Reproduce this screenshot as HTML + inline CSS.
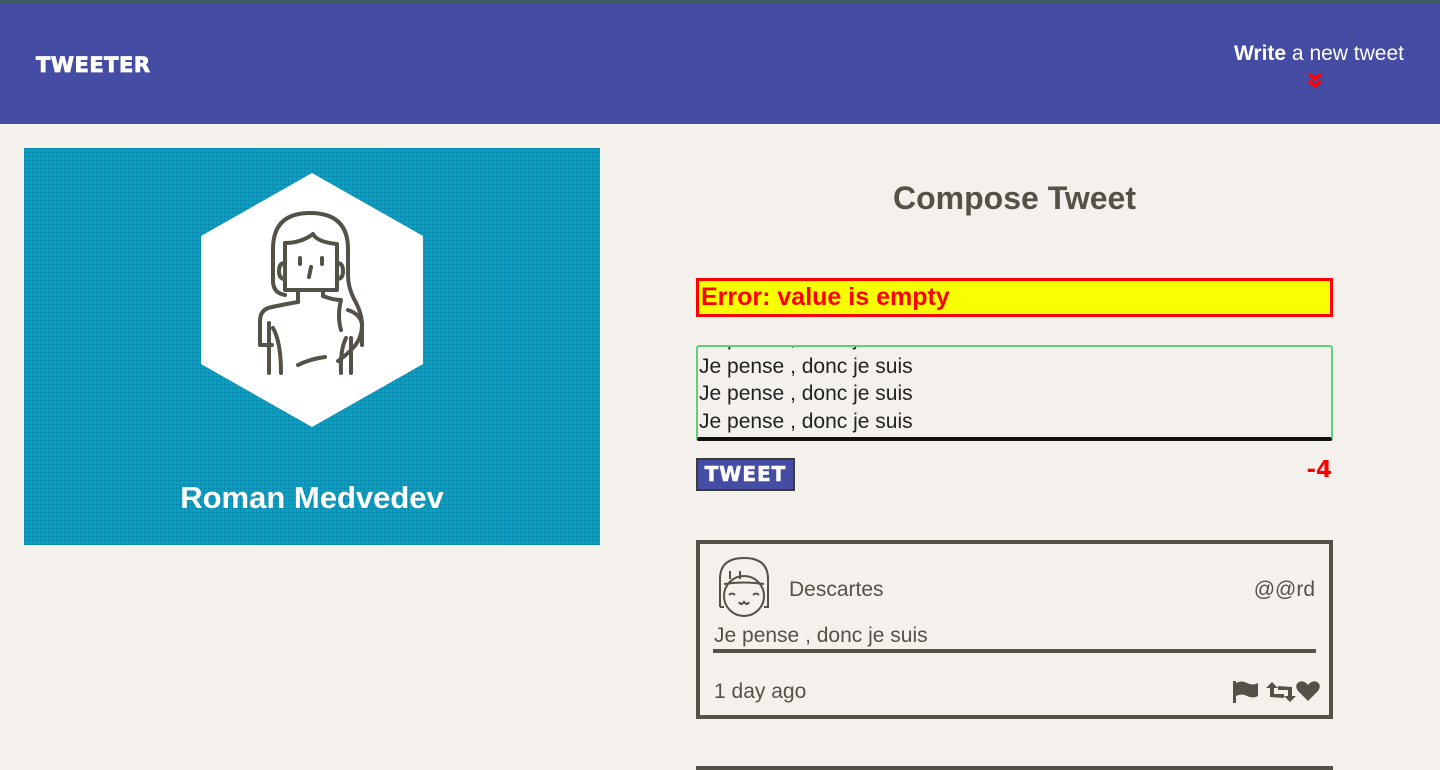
<!DOCTYPE html>
<html><head><meta charset="utf-8"><style>
*{box-sizing:border-box;margin:0;padding:0}
html,body{width:1440px;height:770px;overflow:hidden}
body{background:#f4f1ec;font-family:"Liberation Sans",sans-serif;color:#545149;position:relative}
.hdr{position:absolute;left:0;top:0;width:1440px;height:124px;background:#454ca3;border-top:3px solid #3f5b66}
.logo{position:absolute;left:36px;top:50px;color:#fff;font-weight:900;font-size:21px;letter-spacing:0.5px;font-family:"DejaVu Sans",sans-serif;-webkit-text-stroke:0.8px #fff}
.write{position:absolute;right:36px;top:39px;color:#fff;font-size:21px}
.chev{position:absolute;left:1305px;top:68px}
.card{position:absolute;left:24px;top:148px;width:576px;height:397px;
background-image:repeating-linear-gradient(0deg,rgba(0,70,100,.15) 0 1px,transparent 1px 4px),repeating-linear-gradient(90deg,rgba(0,70,100,.15) 0 1px,transparent 1px 4px);background-color:#0b9fc3}
.name{position:absolute;left:0;width:576px;top:332px;text-align:center;color:#fff;font-weight:bold;font-size:31px}
h2{position:absolute;left:696px;width:637px;top:180px;text-align:center;font-size:32px;font-weight:bold}
.err{position:absolute;left:696px;top:278px;width:637px;height:39px;background:#f8ff00;border:3px solid #f00;color:#f00;font-weight:bold;font-size:25px;padding-left:2px;line-height:32px}
.ta{position:absolute;left:696px;top:345px;width:637px;height:96px;border:2px solid #5fcf7a;border-bottom:4px solid #111;border-radius:3px;overflow:hidden;font-size:21px;color:#222;line-height:27.5px;padding-left:1px}
.btn{position:absolute;left:696px;top:458px;width:99px;height:33px;background:#454ca3;border:2px solid #3a3a3a;color:#fff;font-weight:900;font-family:"DejaVu Sans",sans-serif;font-size:20px;text-align:center;line-height:29px;letter-spacing:1px;-webkit-text-stroke:0.6px #fff}
.cnt{position:absolute;left:1290px;top:457px;width:42px;text-align:right;color:#f00;font-weight:900;font-size:23px;font-family:"DejaVu Sans",sans-serif}
.tw{position:absolute;left:696px;top:540px;width:637px;height:179px;border:4px solid #545149}
.tw2{position:absolute;left:696px;top:766px;width:637px;height:4px;background:#545149}
</style></head><body>
<div class="hdr"><div class="logo">TWEETER</div>
<div class="write"><b>Write</b> a new tweet</div>
<svg class="chev" width="20" height="20" viewBox="0 0 20 20"><path d="M4 3l6 5 6-5M4 10l6 5 6-5" fill="none" stroke="#f00" stroke-width="3.5"/></svg>
</div>
<div class="card">
<svg style="position:absolute;left:177px;top:25px" width="222" height="254" viewBox="0 0 222 254"><polygon points="111,0 222,63 222,191 111,254 0,191 0,63" fill="#fff"/>
<g fill="none" stroke="#545149" stroke-width="4" stroke-linecap="round" stroke-linejoin="round">
<path d="M84 122 q-12-2 -12-14 V76 q0-36 37-36 q38 0 38 36 V102 q0 12 6 24 q8 14 8 26 q0 14 -10 24 q-8 8 -14 12"/>
<path d="M84 117 V70 q16 0 28-9 q4 8 24 10 V117 Z"/>
<path d="M84 90 q-6 0 -6 8 q0 8 6 8 M136 90 q6 0 6 8 q0 8 -6 8"/>
<path d="M97 117 v12 M122 117 v6"/>
<path d="M59 172 V148 q0-12 12-14 q14-3 26-5 M122 123 q10 4 18 4 q-4 16 0 30 M147 137 q12 4 14 14 V172 M59 172 h12"/>
<path d="M68 150 V200 M150 165 V200 M97 192 q12-6 27-8 M72 155 q8 14 8 45 M145 165 q-6 12 -5 35"/>
<path d="M99 85 v6 M121 85 v6 M110 94 l-2 10"/>
</g></svg>
<div class="name">Roman Medvedev</div></div>
<h2>Compose Tweet</h2>
<div class="err">Error: value is empty</div>
<div class="ta"><div style="margin-top:-22px">Je pense , donc je suis<br>Je pense , donc je suis<br>Je pense , donc je suis<br>Je pense , donc je suis</div></div>
<div class="btn">TWEET</div>
<div class="cnt">-4</div>
<div class="tw">
<svg style="position:absolute;left:16px;top:10px" width="60" height="66" viewBox="0 0 60 66"><g fill="none" stroke="#545149" stroke-width="2"><path d="M4 53 V25 q0-21 24-21 q24 0 24 21 V53 h-4 M4 53 h4"/><path d="M8 30 q20-3 40 0"/><circle cx="28" cy="42" r="20"/><path d="M13 41q3-3 6 0M37 41q3-3 6 0M23 48q2 4 5 0q3 4 5 0M14 25v-8M24 25v-8"/></g></svg>
<div style="position:absolute;left:89px;top:34px;font-size:21px">Descartes</div>
<div style="position:absolute;right:14px;top:34px;font-size:21px">@@rd</div>
<div style="position:absolute;left:14px;top:80px;font-size:21px">Je pense , donc je suis</div>
<div style="position:absolute;left:13px;right:13px;top:105px;height:4px;background:#545149"></div>
<div style="position:absolute;left:14px;top:136px;font-size:21px">1 day ago</div>
<svg style="position:absolute;left:529px;top:135px" width="92" height="26" viewBox="0 0 92 26"><g fill="#545149"><rect x="4" y="2" width="3" height="22"/><path d="M7 4 q6-3 11 0 q6 3 11 0 v13 q-5 3-11 0 q-5-3-11 0z"/>
<path d="M41 18 V9 h-4 l6-6 6 6 h-4 v6 h10 v4z" /><path d="M63 8 V17 h4 l-6 6-6-6 h4 v-6 h-10 v-4z"/>
<path d="M79 22 l-10-10 q-4-6 1-9 q5-2 9 3 q4-5 9-3 q5 3 1 9z"/></g></svg>
</div>
<div class="tw2"></div>
</body></html>
